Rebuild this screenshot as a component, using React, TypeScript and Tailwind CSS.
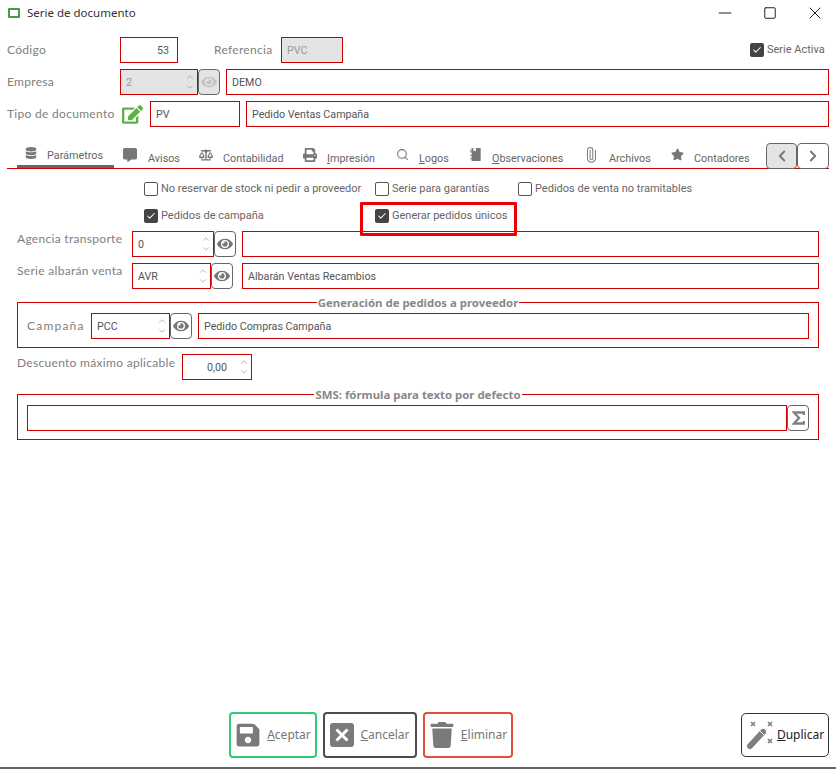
import React from 'react';
import { ChevronUp, ChevronDown, ChevronLeft, ChevronRight, Minus, Square, X, Search, Paperclip, Check } from 'lucide-react';
import { FaDatabase, FaCommentAlt, FaBalanceScale, FaPrint, FaStar, FaEye, FaSave, FaTrash, FaEdit } from 'react-icons/fa';

const LABEL = 'font-["Lato",sans-serif] text-[12px] tracking-[0.3px] text-[#808080]';
const VALUE = 'font-["Roboto",sans-serif] text-[10.7px] text-[#555555] whitespace-nowrap';

function Label({ className, children }: { className: string; children: React.ReactNode }) {
  return <span className={`${LABEL} shrink-0 ${className}`}>{children}</span>;
}

function Field({ className, disabled, right, children }: { className: string; disabled?: boolean; right?: boolean; children?: React.ReactNode }) {
  return (
    <div className={`${VALUE} shrink-0 h-[26px] pt-[2px] border border-[#cc0000] flex items-center ${right ? 'justify-end pr-[8px]' : 'px-[5px]'} ${disabled ? 'bg-[#e4e4e4] text-[#999999]' : ''} ${className}`}>
      {children}
    </div>
  );
}

function Spin({ className, disabled, children }: { className: string; disabled?: boolean; children?: React.ReactNode }) {
  return (
    <div className={`${VALUE} relative shrink-0 h-[26px] pt-[2px] border border-[#cc0000] flex items-center pl-[5px] ${disabled ? 'bg-[#e4e4e4] text-[#999999]' : ''} ${className}`}>
      {children}
      <div className="absolute right-[2px] top-[2px] bottom-[2px] w-[11px] flex flex-col justify-between items-center text-[#888888]">
        <ChevronUp size={10} strokeWidth={1.5} />
        <ChevronDown size={10} strokeWidth={1.5} />
      </div>
    </div>
  );
}

function EyeButton({ disabled }: { disabled?: boolean }) {
  return (
    <button className={`shrink-0 w-[22px] h-[26px] rounded-[4px] border border-[#666666] flex items-center justify-center ${disabled ? 'bg-[#e4e4e4] text-[#c4c4c4]' : 'text-[#777777]'}`}>
      <FaEye size={16} />
    </button>
  );
}

function Check2({ className, checked, children }: { className: string; checked?: boolean; children: React.ReactNode }) {
  return (
    <label className={`flex items-center gap-[3px] shrink-0 ${className}`}>
      {checked ? (
        <span className="w-[14px] h-[14px] rounded-[2px] bg-[#444444] flex items-center justify-center">
          <Check size={10} strokeWidth={2.5} className="text-white" />
        </span>
      ) : (
        <span className="w-[14px] h-[14px] rounded-[2px] border border-[#555555] bg-white" />
      )}
      <span className="font-['Roboto',sans-serif] text-[11px] text-[#666666] whitespace-nowrap pt-[1px]">{children}</span>
    </label>
  );
}

function NotebookIcon({ size = 13, className }: { size?: number; className?: string }) {
  return (
    <svg width={size} height={size} viewBox="0 0 13 15" className={className} fill="currentColor">
      <path d="M2 0h2v4l1.5-1L7 4V0h4.5a1 1 0 0 1 1 1v13a1 1 0 0 1-1 1H2v-2H0v-1h2V9H0V8h2V5H0V4h2V3H0V2h2z" />
    </svg>
  );
}

function UprightClip({ className }: { size?: number; className?: string }) {
  return <Paperclip size={16} strokeWidth={1.5} className={`-rotate-45 -ml-[4px] ${className ?? ''}`} />;
}

function SigmaIcon() {
  return (
    <svg width="13" height="14" viewBox="0 0 13 14" fill="none" stroke="#808080" strokeWidth="2.4">
      <path d="M12 4V1.5H2L7 7l-5 5.5h10V10" />
    </svg>
  );
}

function CloseBoxIcon({ size = 24, className }: { size?: number; className?: string }) {
  return (
    <svg width={size} height={size} viewBox="0 0 24 24" className={className}>
      <rect width="24" height="24" rx="3" fill="currentColor" />
      <path d="M6.5 6.5l11 11m0-11-11 11" stroke="#ffffff" strokeWidth="3" />
    </svg>
  );
}

function WandIcon() {
  return (
    <svg width="30" height="30" viewBox="0 0 30 30" className="text-[#7f7f7f] shrink-0">
      <path d="M4 26 17 12" stroke="currentColor" strokeWidth="6" strokeLinecap="round" />
      <path d="M14 11l4.5 4.5" stroke="#ffffff" strokeWidth="1" />
      <path d="M5 2l4 4m0-4-4 4M22 2l4 4m0-4-4 4M22 19l4 4m0-4-4 4" stroke="currentColor" strokeWidth="1.6" />
    </svg>
  );
}

const tabs = [
  { label: 'Parámetros', Icon: FaDatabase, size: 12, w: 'w-[97px]', pad: 'pl-[8px]', iw: 'w-[22px]', active: true },
  { label: 'Avisos', Icon: FaCommentAlt, size: 14, w: 'w-[85px]', pad: 'pl-[9px]', iw: 'w-[25px]' },
  { label: 'Contabilidad', Icon: FaBalanceScale, size: 14, w: 'w-[104px]', pad: '', iw: 'w-[24px]' },
  { label: 'Impresión', Icon: FaPrint, size: 14, w: 'w-[93px]', pad: '', iw: 'w-[24px]', underline: true },
  { label: 'Logos', Icon: Search, size: 13, w: 'w-[73px]', pad: '', iw: 'w-[23px]', underline: true },
  { label: 'Observaciones', Icon: NotebookIcon, size: 13, w: 'w-[118px]', pad: '', iw: 'w-[23px]', underline: true },
  { label: 'Archivos', Icon: UprightClip, size: 13, w: 'w-[84px]', pad: '', iw: 'w-[22px]' },
  { label: 'Contadores', Icon: FaStar, size: 13, w: 'w-[90px]', pad: '', iw: 'w-[23px]' },
];

function BottomButton({ Icon, label, border, size }: { Icon: React.ComponentType<{ size?: number; className?: string }>; label: string; border: string; size: number }) {
  return (
    <button className={`h-[46px] rounded-[4px] border-2 flex items-center justify-center gap-[6px] shrink-0 ${border}`}>
      <Icon size={size} className="text-[#7a7a7a]" />
      <span className="font-['Noto_Sans',sans-serif] text-[12px] text-[#777777]">
        <span className="underline">{label[0]}</span>{label.slice(1)}
      </span>
    </button>
  );
}

export default function App() {
  return (
    <div className="relative w-[836px] h-[769px] bg-white flex flex-col overflow-hidden">
      {/* title bar */}
      <div className="h-[26px] mb-[1px] flex items-center pl-[8px] shrink-0">
        <span className="w-[12px] h-[10px] border-2 border-[#4a9a4a] rounded-[1px] shrink-0" />
        <span className="ml-[7px] font-['Noto_Sans',sans-serif] text-[11.5px] text-[#333333]">Serie de documento</span>
        <div className="ml-auto flex items-center text-[#222222]">
          <Minus size={20} strokeWidth={1.2} className="mr-[28px]" />
          <Square size={14} strokeWidth={1.7} className="mr-[28px]" />
          <X size={20} strokeWidth={1.2} className="mr-[11px]" />
        </div>
      </div>

      {/* cabecera */}
      <div className="mt-[10px] flex items-center pl-[7px] pr-[7px] h-[26px]">
        <Label className="w-[113px]">Código</Label>
        <Field className="w-[58px]" right>53</Field>
        <Label className="ml-[36px] w-[67px]">Referencia</Label>
        <Field className="w-[62px]" disabled>PVC</Field>
        <div className="ml-auto w-[79px]">
          <Check2 className="" checked>Serie Activa</Check2>
        </div>
      </div>
      <div className="mt-[6px] flex items-center pl-[7px] pr-[7px]">
        <Label className="w-[113px]">Empresa</Label>
        <Spin className="w-[78px]" disabled>2</Spin>
        <EyeButton disabled />
        <Field className="ml-[6px] flex-1 text-[#555555]">DEMO</Field>
      </div>
      <div className="mt-[6px] flex items-center pl-[7px] pr-[7px]">
        <Label className="w-[115px]">Tipo de documento</Label>
        <FaEdit size={21} className="text-[#5cb247] shrink-0 w-[21px]" />
        <Field className="ml-[7px] w-[90px]">PV</Field>
        <Field className="ml-[6px] flex-1">Pedido Ventas Campaña</Field>
      </div>

      {/* pestañas */}
      <div className="mt-[16px] mx-[7px] h-[26px] border-b border-[#cc0000] flex items-stretch pl-[10px]">
        {tabs.map(t => (
          <div key={t.label} className={`${t.w} ${t.pad} shrink-0 flex items-center h-[25px] ${t.active ? 'border-b-[3px] border-[#666666]' : ''}`}>
            <span className={`${t.iw} shrink-0 flex items-center -mt-[2px]`}>
              <t.Icon size={t.size} className="text-[#777777]" />
            </span>
            <span className={`font-['Roboto',sans-serif] text-[10.8px] text-[#666666] whitespace-nowrap ${t.active ? 'mt-[4px]' : 'mt-[8px]'}`}>
              {t.underline ? <><span className="underline">{t.label[0]}</span>{t.label.slice(1)}</> : t.label}
            </span>
          </div>
        ))}
        <div className="ml-auto flex items-stretch">
          <button className="w-[31px] h-[26px] rounded-[4px] border border-[#666666] bg-[#e4e4e4] flex items-center justify-center text-[#777777]">
            <ChevronLeft size={18} strokeWidth={2.5} />
          </button>
          <button className="w-[32px] h-[26px] rounded-[4px] border border-[#666666] flex items-center justify-center text-[#777777]">
            <ChevronRight size={18} strokeWidth={2.5} />
          </button>
        </div>
      </div>

      {/* parametros */}
      <div className="mt-[13px] flex pl-[144px] h-[14px]">
        <Check2 className="w-[231px]">No reservar de stock ni pedir a proveedor</Check2>
        <Check2 className="w-[143px]">Serie para garantías</Check2>
        <Check2 className="">Pedidos de venta no tramitables</Check2>
      </div>
      <div className="mt-[13px] flex pl-[144px] h-[14px]">
        <Check2 className="w-[231px]" checked>Pedidos de campaña</Check2>
        <Check2 className="" checked>Generar pedidos únicos</Check2>
      </div>

      <div className="mt-[8px] flex pl-[17px] pr-[17px]">
        <Label className="w-[115px] -mt-[1px]">Agencia transporte</Label>
        <Spin className="w-[82px]">0</Spin>
        <EyeButton />
        <Field className="ml-[6px] flex-1" />
      </div>
      <div className="mt-[6px] flex pl-[17px] pr-[17px]">
        <Label className="w-[115px] -mt-[1px]">Serie albarán venta</Label>
        <Spin className="w-[79px]">AVR</Spin>
        <EyeButton />
        <Field className="ml-[9px] flex-1">Albarán Ventas Recambios</Field>
      </div>

      <fieldset className="mt-[6px] mx-[17px] border border-[#cc0000] px-[9px] pt-[3px] pb-[8px] flex items-center">
        <legend className="mx-auto px-[1px] font-['Noto_Sans',sans-serif] text-[11.4px] font-bold leading-[15px] text-[#888888]">Generación de pedidos a proveedor</legend>
        <div className="flex items-center">
          <Label className="w-[64px]"><span className="tracking-[1.2px]">Campaña</span></Label>
          <Spin className="w-[79px]">PCC</Spin>
          <EyeButton />
          <Field className="ml-[6px] w-[611px]">Pedido Compras Campaña</Field>
        </div>
      </fieldset>

      <div className="mt-[6px] flex pl-[17px]">
        <Label className="w-[165px]">Descuento máximo aplicable</Label>
        <Spin className="w-[70px] justify-end pr-[24px]">0,00</Spin>
      </div>

      <fieldset className="mt-[7px] mx-[17px] border border-[#cc0000] px-[9px] pt-[3px] pb-[8px]">
        <legend className="mx-auto px-[1px] font-['Noto_Sans',sans-serif] text-[11.4px] font-bold leading-[15px] text-[#888888]">SMS: fórmula para texto por defecto</legend>
        <div className="flex items-center">
          <Field className="flex-1" />
          <button className="shrink-0 w-[22px] h-[26px] rounded-[4px] border border-[#666666] flex items-center justify-center">
            <SigmaIcon />
          </button>
        </div>
      </fieldset>

      {/* botones */}
      <div className="mt-auto mb-[9px] flex items-center pl-[229px] pr-[7px]">
        <div className="flex gap-[6px]">
          <div className="w-[88px] flex flex-col"><BottomButton Icon={FaSave} label="Aceptar" size={26} border="border-[#2ecc71]" /></div>
          <div className="w-[94px] flex flex-col"><BottomButton Icon={CloseBoxIcon} label="Cancelar" size={24} border="border-[#4d4d4d]" /></div>
          <div className="w-[90px] flex flex-col"><BottomButton Icon={FaTrash} label="Eliminar" size={26} border="border-[#e74c3c]" /></div>
        </div>
        <button className="ml-auto w-[88px] h-[44px] rounded-[5px] border border-[#333333] flex items-center justify-center gap-[1px]">
          <WandIcon />
          <span className="font-['Noto_Sans',sans-serif] text-[12px] text-[#222222]"><span className="underline">D</span>uplicar</span>
        </button>
      </div>
      <div className="h-[2px] bg-[#666666] shrink-0" />

      {/* recuadro rojo de resaltado */}
      <div className="absolute left-[360px] top-[202px] w-[157px] h-[34px] border-[3px] border-[#ee0000] rounded-[1px]" />
    </div>
  );
}
